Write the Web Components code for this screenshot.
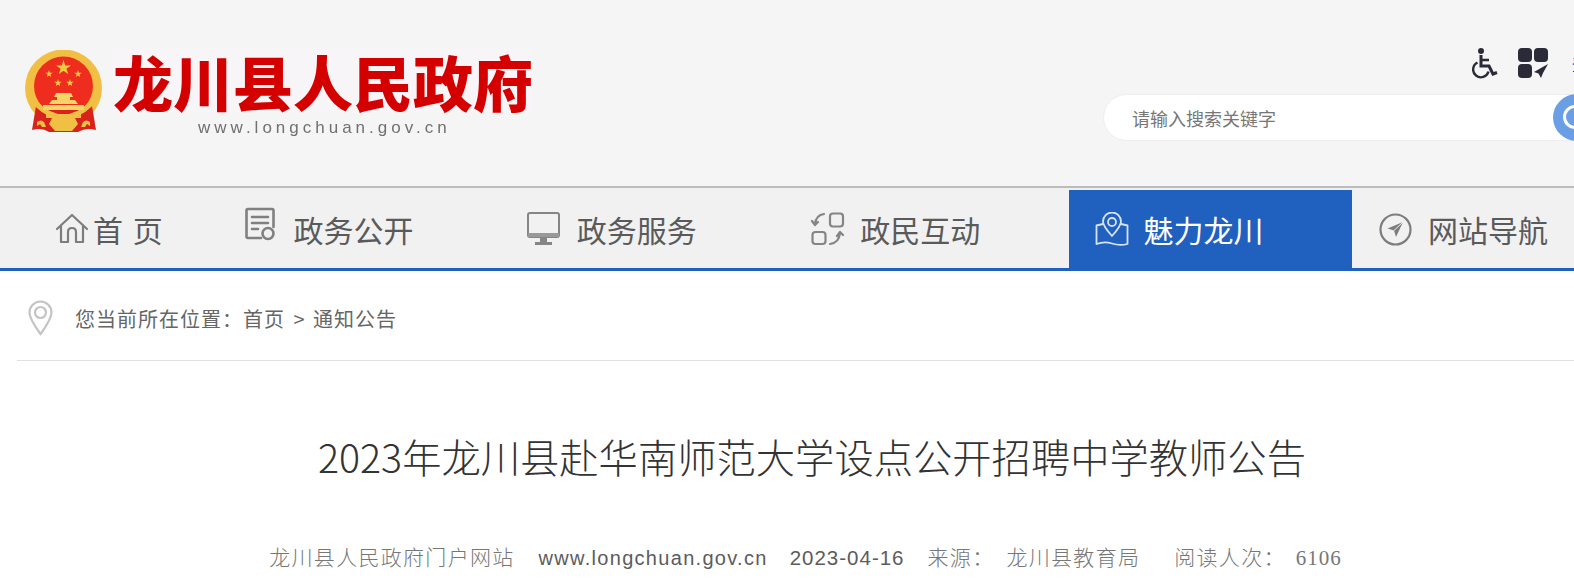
<!DOCTYPE html>
<html lang="zh-CN">
<head>
<meta charset="utf-8">
<title>龙川县人民政府</title>
<style>
  html, body { margin: 0; padding: 0; overflow: hidden; background: #fff; }
  body { font-family: "Noto Sans CJK SC", "Liberation Sans", sans-serif; width: 1574px; height: 583px; }
</style>
</head>
<body>
<gov-header></gov-header>
<gov-nav>
  <nav-item style="width:201.400px" pad="38" gap="4">
    <svg slot="icon" width="34" height="34" viewBox="0 0 34 34" fill="none" stroke="#7d7d7d" stroke-width="2.2" stroke-linejoin="round" stroke-linecap="round"><path d="M2 17 17 3l15 14M6 14v16h7V20q0-4 4-4t4 4v10h7V14"/></svg>
    <span style="word-spacing:3px">首 页</span>
  </nav-item>
  <nav-item icon-y="-5">
    <svg slot="icon" width="32" height="34" viewBox="0 0 32 34" fill="none" stroke="#808080" stroke-width="2.6" stroke-linecap="round" stroke-linejoin="round"><path d="M16 31H3q-1.500 0-1.500-1.500V3.500Q1.500 2 3 2h24q1.500 0 1.500 1.500V20M7 10h16M7 16h16M7 22h6"/><circle cx="23" cy="26.500" r="5.500"/></svg>
    政务公开
  </nav-item>
  <nav-item pad="25" gap="17">
    <svg slot="icon" width="33" height="34" viewBox="0 0 33 34" fill="none"><rect x="1" y="1" width="31" height="24" rx="2" stroke="#858585" stroke-width="2"/><rect x="1" y="21" width="31" height="4" fill="#999"/><path d="M13 25h7v5h-7zM8 30h17v3H8z" fill="#858585"/></svg>
    政务服务
  </nav-item>
  <nav-item pad="26" gap="15">
    <svg slot="icon" width="34" height="34" viewBox="0 0 34 34" fill="none" stroke="#858585" stroke-width="2.200" stroke-linecap="round" stroke-linejoin="round"><rect x="19" y="1.500" width="13" height="13" rx="3"/><rect x="1.500" y="20" width="13" height="12" rx="3"/><path d="M13 2Q5 3 4 12M1 9l3 4 3-3M19 32q9-1 10-11M26 24l3-4 3 3"/></svg>
    政民互动
  </nav-item>
  <nav-item active pad="26" gap="15">
    <svg slot="icon" width="34" height="34" viewBox="0 0 34 34" fill="none" stroke="#d7e3f5" stroke-width="1.800" stroke-linecap="round" stroke-linejoin="round"><path d="M17 24Q8 14 8 9.500a9 9 0 0 1 18 0Q26 14 17 24Z"/><circle cx="17" cy="10" r="4"/><path d="M8 12 1.500 13.500V32q8-3 15.500-.5T32.500 32V13.500L26 12"/></svg>
    魅力龙川
  </nav-item>
  <nav-item pad="27" gap="16">
    <svg slot="icon" width="33" height="33" viewBox="0 0 33 33" fill="none"><circle cx="16.500" cy="16.500" r="15" stroke="#7d7d7d" stroke-width="2.200"/><path d="M24 9 8.500 15.500l6.500 2 2 6.500z" fill="#7d7d7d"/><path d="M24 9 15 17.500" stroke="#f1f1f1" stroke-width="1"/></svg>
    网站导航
  </nav-item>
</gov-nav>
<bread-crumb><span>首页</span><span class="sep" style="margin:0 2px 0 3px"> &gt; </span><span>通知公告</span></bread-crumb>
<article-head heading="2023年龙川县赴华南师范大学设点公开招聘中学教师公告"></article-head>

<template id="header-tpl">
  <style>
    :host { display: block; height: 186px; background: #f5f5f5; overflow: hidden; }
    .row { display: flex; width: 1700px; }
    .logo { flex: none; width: 1079px; margin-left: 24px; padding-top: 50px; display: flex; gap: 8px; }
    .logo svg { flex: none; filter: blur(.6px); }
    .name { font-size: 60px; line-height: 64px; margin-top: -1px; font-weight: 900; color: #d40000; white-space: nowrap; background: #f8f5f8; filter: blur(.4px); }
    .url { font: 17px/20px "Liberation Sans", sans-serif; letter-spacing: 4px; color: #707070; margin: 5px 0 0 85px; white-space: nowrap; filter: blur(.4px); }
    .tools { flex: none; width: 521px; }
    .icons { display: flex; align-items: flex-start; height: 46px; padding-top: 48px; margin-left: 369px; }
    .icons svg:first-child { margin-right: 20px; }
    .login { font-size: 16px; color: #1a1ab8; line-height: 32px; white-space: nowrap; margin-left: 24px; }
    .search { box-sizing: border-box; height: 47px; display: flex; align-items: center; background: #fff; border: 1px solid #eeeeee; border-radius: 24px; padding-left: 28px; font-size: 18px; color: #777; position: relative; }
    .go { position: absolute; left: 449px; top: -1px; width: 48px; height: 47px; border-radius: 50%; background: #6a9fe6; }
    .go::before { content: ""; position: absolute; left: 10px; top: 11px; width: 24px; height: 24px; box-sizing: border-box; border: 3px solid #fff; border-radius: 50%; }
  </style>
  <div class="row">
    <div class="logo">
      <svg width="81" height="84" viewBox="0 0 81 84">
        <circle cx="39.500" cy="38" r="38.500" fill="#f2bf45"/>
        <circle cx="39.500" cy="36" r="29.500" fill="#ee2d1f"/>
        <path d="M12 56 8 80q10-3 17 2h29q8-5 18-2l-4-24-10 4H22z" fill="#d8231c"/>
        <path d="M12 54Q39.500 80 67 54" fill="none" stroke="#f2bf45" stroke-width="5"/>
        <path d="M39.500 10l1.800 5.400h5.700l-4.600 3.300 1.800 5.400-4.700-3.300-4.700 3.300 1.800-5.400-4.600-3.300h5.700z" fill="#f6c945"/>
        <path d="M25 20l.9 2.700h2.800l-2.300 1.700.9 2.700-2.300-1.700-2.300 1.700.9-2.700-2.300-1.700h2.800zM54 20l.9 2.700h2.800l-2.300 1.700.9 2.700-2.300-1.700-2.300 1.700.9-2.700-2.300-1.700h2.800zM34 29l.9 2.700h2.800l-2.300 1.700.9 2.700-2.300-1.700-2.300 1.700.9-2.700-2.300-1.700h2.800zM46 29l.9 2.700h2.800l-2.300 1.700.9 2.700-2.300-1.700-2.300 1.700.9-2.700-2.300-1.700h2.800z" fill="#f6c945"/>
        <path d="M32 43h15l2 4h-3v3h5l3 4H25l3-4h5v-3h-3zM19 55h41v5H19z" fill="#f6d468"/>
        <path d="M22 64h35v4h-6l3 6-6 7H31l-6-7 3-6h-6z" fill="#f2bf45"/>
        <path d="M13 72q4-3 7 0l2 5h-4l-2-3-3 2zM66 72q-4-3-7 0l-2 5h4l2-3 3 2z" fill="#f2bf45"/>
      </svg>
      <div>
        <div class="name">龙川县人民政府</div>
        <div class="url">www.longchuan.gov.cn</div>
      </div>
    </div>
    <div class="tools">
      <div class="icons">
        <svg width="26" height="31" viewBox="0 0 26 31" fill="none">
          <circle cx="9" cy="3" r="3" fill="#2a2a38"/>
          <path d="M9 7v11h8l4 8 4-1.500" stroke="#2a2a38" stroke-width="3"/>
          <path d="M9 12h8" stroke="#2a2a38" stroke-width="2.500"/>
          <path d="M5.500 14.500a7.800 7.800 0 1 0 11 9" stroke="#2a2a38" stroke-width="2.400"/>
        </svg>
        <svg width="30" height="30" viewBox="0 0 30 30">
          <rect x="0" y="0" width="14" height="14" rx="4" fill="#2a2a38"/>
          <rect x="16" y="0" width="14" height="14" rx="4" fill="#2a2a38"/>
          <rect x="0" y="16" width="14" height="14" rx="4" fill="#2a2a38"/>
          <path d="M30 16 16 24l4.500 1.500L23 30l2-5z" fill="#2a2a38"/>
        </svg>
        <span class="login">登录</span>
      </div>
      <div class="search">请输入搜索关键字<span class="go"></span></div>
    </div>
  </div>
</template>

<template id="nav-tpl">
  <style>
    :host { display: block; height: 85px; box-sizing: border-box; background: #f1f1f1; border-top: 2px solid #bcbcbc; border-bottom: 3px solid #2061c0; overflow: hidden; }
    .row { display: flex; width: 1800px; margin-left: 17px; height: 80px; }
  </style>
  <div class="row"><slot></slot></div>
</template>

<template id="item-tpl">
  <style>
    :host { display: flex; flex: none; box-sizing: border-box; width: 283.400px; height: 78px; margin-top: 2px; align-items: center; font-size: 30px; color: #5a5a5a; white-space: nowrap; font-weight: 400; }
    :host([active]) { background: #2061c0; color: #fff; }
    .icon { display: flex; flex: none; }
  </style>
  <span class="icon"><slot name="icon"></slot></span>
  <span class="label"><slot></slot></span>
</template>

<template id="crumb-tpl">
  <style>
    :host { display: block; margin-left: 17px; width: 1590px; height: 90px; box-sizing: border-box; border-bottom: 1px solid #e0e0e0; }
    .row { display: flex; align-items: center; height: 89px; padding-left: 11px; padding-top: 5px; box-sizing: border-box; font-size: 20px; letter-spacing: 1px; color: #666; white-space: nowrap; }
    svg { flex: none; margin-right: 22px; }
  </style>
  <div class="row">
    <svg width="25" height="36" viewBox="0 0 25 36" fill="none" stroke="#c4c4c4" stroke-width="2.200"><path d="M12.500 34Q1.500 19 1.500 12.500a11 11 0 0 1 22 0Q23.500 19 12.500 34Z"/><circle cx="12.500" cy="12.500" r="5.500"/></svg>
    <span>您当前所在位置：<slot></slot></span>
  </div>
</template>

<template id="head-tpl">
  <style>
    :host { display: block; margin-left: 17px; width: 1590px; text-align: center; }
    h1 { margin: 0; padding-top: 65px; font-size: 39.300px; line-height: 60px; font-weight: 300; color: #333; white-space: nowrap; }
    .meta { margin-top: 55px; padding-right: 13px; font-size: 21px; line-height: 30px; color: #777; white-space: nowrap; letter-spacing: 1.300px; font-weight: 300; }
    .meta .en { font-family: "Liberation Sans", sans-serif; font-size: 20px; color: #5c5c5c; letter-spacing: 1.300px; font-weight: 400; margin: 0 22px 0 24px; }
    .meta .date { font-size: 20.500px; letter-spacing: 1px; margin: 0 23px 0 0; }
    .meta .num { font-family: "Liberation Serif", serif; letter-spacing: 1px; font-weight: 400; margin-left: 10px; }
    .gap { margin-left: 12px; }
    .wide { margin-left: 34px; }
  </style>
  <h1></h1>
  <div class="meta"><span>龙川县人民政府门户网站</span><span class="en">www.longchuan.gov.cn</span><span class="en date">2023-04-16</span><span>来源：</span><span class="gap">龙川县教育局</span><span class="wide">阅读人次：</span><span class="num">6106</span></div>
</template>

<script>
function stamp(el, id) {
  const root = el.attachShadow({ mode: "open" });
  root.appendChild(document.getElementById(id).content.cloneNode(true));
  return root;
}

class GovHeader extends HTMLElement {
  constructor() { super(); stamp(this, "header-tpl"); }
}

class GovNav extends HTMLElement {
  constructor() { super(); stamp(this, "nav-tpl"); }
}

class NavItem extends HTMLElement {
  constructor() { super(); this.root = stamp(this, "item-tpl"); }
  connectedCallback() {
    const pad = this.getAttribute("pad") || 27;
    const gap = this.getAttribute("gap") || 16;
    this.style.paddingLeft = pad + "px";
    this.root.querySelector(".icon").style.marginRight = gap + "px";
    const lift = this.getAttribute("icon-y");
    if (lift) this.root.querySelector(".icon").style.marginTop = (lift * 2) + "px";
  }
}

class BreadCrumb extends HTMLElement {
  constructor() { super(); stamp(this, "crumb-tpl"); }
}

class ArticleHead extends HTMLElement {
  constructor() { super(); this.root = stamp(this, "head-tpl"); }
  connectedCallback() {
    this.root.querySelector("h1").textContent = this.getAttribute("heading");
  }
}

customElements.define("gov-header", GovHeader);
customElements.define("gov-nav", GovNav);
customElements.define("nav-item", NavItem);
customElements.define("bread-crumb", BreadCrumb);
customElements.define("article-head", ArticleHead);
</script>
</body>
</html>
